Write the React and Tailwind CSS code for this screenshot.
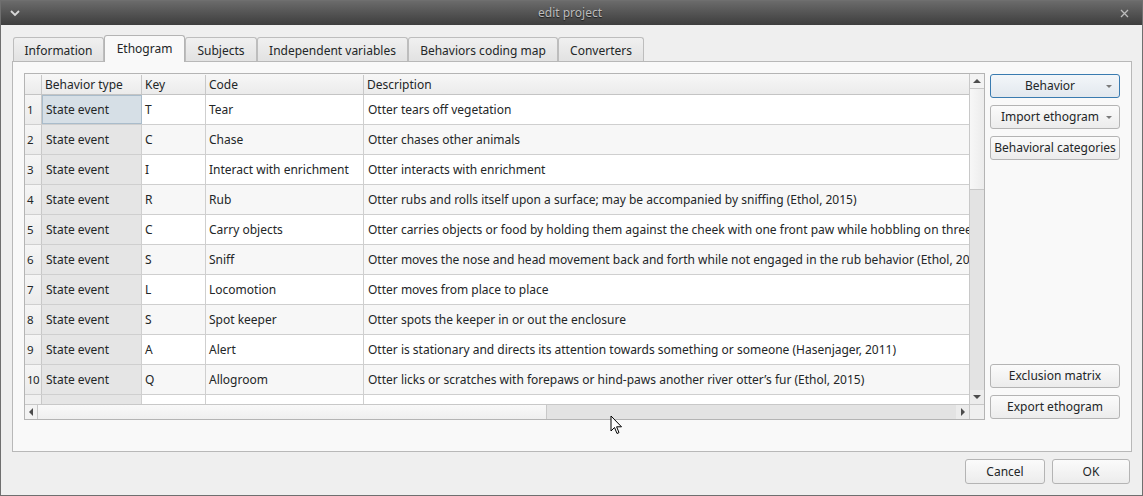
import React from "react";

const rows = [
  ["T", "Tear", "Otter tears off vegetation"],
  ["C", "Chase", "Otter chases other animals"],
  ["I", "Interact with enrichment", "Otter interacts with enrichment"],
  ["R", "Rub", "Otter rubs and rolls itself upon a surface; may be accompanied by sniffing (Ethol, 2015)"],
  ["C", "Carry objects", "Otter carries objects or food by holding them against the cheek with one front paw while hobbling on three legs"],
  ["S", "Sniff", "Otter moves the nose and head movement back and forth while not engaged in the rub behavior (Ethol, 2015)"],
  ["L", "Locomotion", "Otter moves from place to place"],
  ["S", "Spot keeper", "Otter spots the keeper in or out the enclosure"],
  ["A", "Alert", "Otter is stationary and directs its attention towards something or someone (Hasenjager, 2011)"],
  ["Q", "Allogroom", "Otter licks or scratches with forepaws or hind-paws another river otter’s fur (Ethol, 2015)"],
];

const tabs = [
  ["Information", "w-[91px]"],
  ["Ethogram", "w-[81px]"],
  ["Subjects", "w-[72px]"],
  ["Independent variables", "w-[151px]"],
  ["Behaviors coding map", "w-[150px]"],
  ["Converters", "w-[86px]"],
];

function Caret({ dir, className }) {
  // small scroll arrow triangles
  const d = {
    up: "M0 5 L4 1 L8 5 Z",
    down: "M0 1 L4 5 L8 1 Z",
    left: "M5 0 L1 4 L5 8 Z",
    right: "M1 0 L5 4 L1 8 Z",
  }[dir];
  const vert = dir === "up" || dir === "down";
  return (
    <svg width={vert ? 8 : 6} height={vert ? 6 : 8} className={className}>
      <path d={d} fill="#4d4d4d" />
    </svg>
  );
}

function Button({ children, arrow, focused, className = "" }) {
  return (
    <div
      className={
        "relative flex items-center justify-center rounded-[3px] border bg-gradient-to-b text-[12px] text-[#232627] " +
        (focused
          ? "border-[#3a7bb0] from-[#f3f6f9] to-[#e2e8ee] "
          : "border-[#b4b4b4] from-[#fbfbfb] to-[#ececec] ") +
        className
      }
    >
      <span className={arrow ? "pr-[10px]" : ""}>{children}</span>
      {arrow && (
        <svg width="6" height="4" className="absolute right-[7px] top-[10px]">
          <path d="M0 0 L3 3 L6 0 Z" fill="#7a7a7a" />
        </svg>
      )}
    </div>
  );
}

export default function App() {
  return (
    <div className="relative flex h-[496px] w-[1143px] flex-col border border-[#6f6f6f] bg-[#efefef] font-['Noto_Sans',sans-serif] text-[12px] text-[#232627]">
      {/* title bar */}
      <div className="flex h-[24px] shrink-0 items-center bg-gradient-to-b from-[#6b6b6b] to-[#3e3e3e] px-[9px]">
        <svg width="10" height="7" viewBox="0 0 10 7">
          <path d="M1 1 L5 5 L9 1" stroke="#d8d8d8" strokeWidth="1.8" fill="none" />
        </svg>
        <div className="flex-1 text-center text-[12px] text-[#bcbcbc] [text-shadow:0_1px_1px_#1e1e1e]">
          edit project
        </div>
        <svg width="9" height="9" viewBox="0 0 9 9" className="mr-[4px]">
          <path d="M1 1 L8 8 M8 1 L1 8" stroke="#bdbdbd" strokeWidth="1.3" />
        </svg>
      </div>

      <div className="flex flex-1 flex-col pl-[11px] pr-[10px] pt-[10px]">
        {/* tabs */}
        <div className="flex h-[26px] items-end pl-px">
          {tabs.map(([t, w], i) =>
            i === 1 ? (
              <div
                key={t}
                className={`relative z-10 -mb-px flex h-[27px] items-center justify-center rounded-t-[3px] border border-b-0 border-[#b4b4b4] bg-[#f9f9f9] pb-[1px] ${w}`}
              >
                {t}
              </div>
            ) : (
              <div
                key={t}
                className={`flex h-[24px] items-center justify-center rounded-t-[3px] border border-b-0 border-[#bdbdbd] bg-gradient-to-b from-[#f0f0f0] to-[#e2e2e2] pt-[2px] ${w}`}
              >
                {t}
              </div>
            )
          )}
        </div>

        {/* pane */}
        <div className="flex h-[391px] gap-[5px] border border-[#b8b8b8] bg-[#f9f9f9] px-[11px] pt-[11px]">
          {/* table */}
          <div className="flex h-[347px] w-[961px] flex-col border border-[#b4b4b4] bg-white">
            <div className="flex h-[330px]">
              <div className="flex w-[944px] flex-col overflow-hidden">
                {/* header */}
                <div className="flex h-[21px] shrink-0 border-b border-[#c4c4c4] bg-gradient-to-b from-[#f7f7f7] to-[#ebebeb] pt-px">
                  <div className="w-[17px] shrink-0 border-r border-[#c8c8c8]" />
                  <div className="w-[100px] shrink-0 border-r border-[#c8c8c8] pl-[3px] leading-[19px]">Behavior type</div>
                  <div className="w-[64px] shrink-0 border-r border-[#c8c8c8] pl-[3px] leading-[19px]">Key</div>
                  <div className="w-[158px] shrink-0 border-r border-[#c8c8c8] pl-[3px] leading-[19px]">Code</div>
                  <div className="flex-1 pl-[3px] leading-[19px]">Description</div>
                </div>
                {rows.map(([k, c, d], i) => (
                  <div
                    key={i}
                    className={`flex h-[30px] shrink-0 border-b border-[#cfcfcf] ${i % 2 ? "bg-[#f7f7f7]" : "bg-white"}`}
                  >
                    <div className="w-[17px] shrink-0 border-r border-[#c8c8c8] bg-gradient-to-b from-[#f5f5f5] to-[#ebebeb] pl-[2px] text-[11.5px] leading-[30px] tracking-[-0.5px]">
                      {i + 1}
                    </div>
                    {i === 0 ? (
                      <div className="w-[100px] shrink-0 border border-[#a9bccb] bg-[#d6dfe6] pl-[3px] leading-[27px]">
                        State event
                      </div>
                    ) : (
                      <div className="w-[100px] shrink-0 border-r border-[#cfcfcf] bg-[#e5e5e5] pl-[4px] leading-[29px]">
                        State event
                      </div>
                    )}
                    <div className="w-[64px] shrink-0 border-r border-[#cfcfcf] pl-[3px] leading-[29px]">{k}</div>
                    <div className="w-[158px] shrink-0 border-r border-[#cfcfcf] pl-[3px] leading-[29px]">{c}</div>
                    <div className="flex-1 overflow-hidden whitespace-nowrap pl-[4px] leading-[29px]">{d}</div>
                  </div>
                ))}
                <div className="flex h-[9px] shrink-0 bg-white">
                  <div className="w-[17px] shrink-0 border-r border-[#c8c8c8] bg-[#f0f0f0]" />
                  <div className="w-[100px] shrink-0 border-r border-[#cfcfcf] bg-[#e5e5e5]" />
                  <div className="w-[64px] shrink-0 border-r border-[#cfcfcf]" />
                  <div className="w-[158px] shrink-0 border-r border-[#cfcfcf]" />
                  <div className="flex-1" />
                </div>
              </div>
              {/* vertical scrollbar */}
              <div className="flex w-[15px] flex-col border-l border-[#c8c8c8] bg-[#e3e3e3]">
                <div className="flex h-[14px] items-center justify-center bg-[#f3f3f3]">
                  <Caret dir="up" />
                </div>
                <div className="h-[102px] border-y border-[#c8c8c8] bg-gradient-to-r from-[#f7f7f7] to-[#ececec]" />
                <div className="flex-1" />
                <div className="flex h-[14px] items-center justify-center bg-[#ececec]">
                  <Caret dir="down" />
                </div>
              </div>
            </div>
            {/* horizontal scrollbar */}
            <div className="flex h-[15px] border-t border-[#c8c8c8]">
              <div className="flex w-[12px] items-center justify-center bg-[#f3f3f3]">
                <Caret dir="left" />
              </div>
              <div className="w-[510px] border-x border-[#c8c8c8] bg-gradient-to-b from-[#f9f9f9] to-[#efefef]" />
              <div className="flex-1 bg-[#e3e3e3]" />
              <div className="flex w-[14px] items-center justify-center border-r border-[#c8c8c8] bg-[#ececec]">
                <Caret dir="right" />
              </div>
              <div className="w-[14px] bg-[#efefef]" />
            </div>
          </div>

          {/* side buttons */}
          <div className="mt-px flex w-[130px] flex-col">
            <Button arrow focused className="h-[24px]">Behavior</Button>
            <Button arrow className="mt-[7px] h-[24px]">Import ethogram</Button>
            <Button className="mt-[7px] h-[24px]">Behavioral categories</Button>
            <div className="flex-1" />
            <Button className="h-[24px]">Exclusion matrix</Button>
            <Button className="mb-[32px] mt-[7px] h-[24px]">Export ethogram</Button>
          </div>
        </div>

        {/* footer */}
        <div className="flex justify-end gap-[7px] pr-[2px] pt-[7px]">
          <Button className="h-[25px] w-[80px]">Cancel</Button>
          <Button className="h-[25px] w-[78px]">OK</Button>
        </div>
      </div>

      {/* mouse pointer */}
      <svg width="13" height="20" viewBox="0 0 13 20" className="absolute left-[609px] top-[414px]">
        <path d="M1 1 L1 16 L4.5 12.5 L7 18.5 L9 17.6 L6.6 11.8 L11.5 11.8 Z" fill="#ffffff" stroke="#000000" strokeWidth="1" strokeLinejoin="round" />
      </svg>
    </div>
  );
}
